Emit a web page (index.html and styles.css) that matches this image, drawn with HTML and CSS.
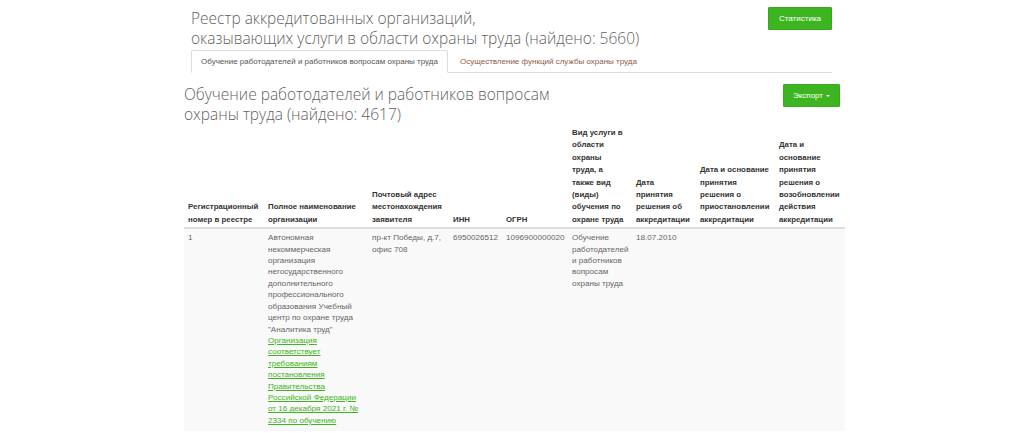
FILE: index.html
```html
<!DOCTYPE html>
<html lang="ru">
<head>
<meta charset="utf-8">
<title>Реестр аккредитованных организаций</title>
<link rel="stylesheet" href="styles.css">
</head>
<body>
<div class="top">
  <div class="top-head">
    <h1 class="page-title">Реестр аккредитованных организаций,<br>оказывающих услуги в области охраны труда (найдено: 5660)</h1>
    <a class="btn btn-stat" href="#">Статистика</a>
  </div>
  <ul class="tabs">
    <li class="tab active"><a href="#">Обучение работодателей и работников вопросам охраны труда</a></li>
    <li class="tab"><a href="#">Осуществление функций службы охраны труда</a></li>
  </ul>
</div>

<div class="section">
  <div class="section-head">
    <h2 class="section-title">Обучение работодателей и работников вопросам<br>охраны труда (найдено: 4617)</h2>
    <a class="btn btn-export" href="#">Экспорт <span class="caret"></span></a>
  </div>
  <table class="registry">
    <colgroup>
      <col class="c1"><col class="c2"><col class="c3"><col class="c4"><col class="c5"><col class="c6"><col class="c7"><col class="c8"><col class="c9">
    </colgroup>
    <thead>
      <tr>
        <th>Регистрационный номер в реестре</th>
        <th>Полное наименование организации</th>
        <th>Почтовый адрес местонахождения заявителя</th>
        <th>ИНН</th>
        <th>ОГРН</th>
        <th class="th-narrow">Вид услуги в области охраны труда, а также вид (виды) обучения по охране труда</th>
        <th>Дата принятия решения об аккредитации</th>
        <th>Дата и основание принятия решения о приостановлении аккредитации</th>
        <th>Дата и основание принятия решения о возобновлении действия аккредитации</th>
      </tr>
    </thead>
    <tbody>
      <tr>
        <td>1</td>
        <td>Автономная некоммерческая организация негосударственного дополнительного профессионального образования Учебный центр по охране труда "Аналитика труд"<br><a class="doc-link" href="#">Организация соответствует требованиям постановления Правительства Российской Федерации от 16 декабря 2021 г. № 2334 по обучению</a></td>
        <td>пр-кт Победы, д.7, офис 708</td>
        <td>6950026512</td>
        <td>1096900000020</td>
        <td>Обучение работодателей и работников вопросам охраны труда</td>
        <td>18.07.2010</td>
        <td></td>
        <td></td>
      </tr>
    </tbody>
  </table>
</div>
</body>
</html>
```

FILE: styles.css
```css
html, body {
  margin: 0;
  padding: 0;
  background: #fff;
}
body {
  font-family: "Liberation Sans", Arial, sans-serif;
  font-size: 8px;
  line-height: 11px;
  color: #666;
}
a { text-decoration: none; }

.top {
  width: 641px;
  margin-left: 191px;
}
.top-head {
  display: flex;
  justify-content: space-between;
  align-items: flex-start;
  margin-bottom: 2px;
}
.page-title {
  margin: 0;
  padding-top: 8px;
  font-family: "Open Sans", sans-serif;
  font-weight: 300;
  font-size: 15.5px;
  line-height: 20px;
  color: #5f5f5f;
}
.btn {
  display: inline-flex;
  align-items: center;
  justify-content: center;
  background: #3cb521;
  border: 1px solid #3aa91f;
  color: #fff;
  font-size: 8px;
  height: 23px;
  box-sizing: border-box;
  border-radius: 1px;
}
.btn-stat {
  width: 64px;
  margin-top: 7px;
}
.tabs {
  display: flex;
  list-style: none;
  margin: 0;
  padding: 0;
  border-bottom: 1px solid #ddd;
}
.tab {
  margin-bottom: -1px;
  margin-right: 2px;
}
.tab a {
  display: block;
  padding: 5px 9px;
  line-height: 11px;
  border: 1px solid transparent;
  border-radius: 2px 2px 0 0;
  color: #8f5b48;
}
.tab.active a {
  color: #555;
  background: #fff;
  border-color: #ddd #ddd transparent;
}

.section {
  width: 661px;
  margin-left: 184px;
}
.section-head {
  display: flex;
  justify-content: space-between;
  align-items: flex-start;
  margin-top: 11px;
}
.section-title {
  margin: 0;
  font-family: "Open Sans", sans-serif;
  font-weight: 300;
  font-size: 15.5px;
  line-height: 20px;
  color: #5f5f5f;
}
.btn-export {
  width: 57px;
  margin-right: 5px;
  gap: 3px;
}
.caret {
  display: inline-block;
  width: 0;
  height: 0;
  border-left: 2.5px solid transparent;
  border-right: 2.5px solid transparent;
  border-top: 2.5px solid #fff;
}

.registry {
  width: 661px;
  table-layout: fixed;
  border-collapse: collapse;
}
.c1 { width: 80px; }
.c2 { width: 104px; }
.c3 { width: 81px; }
.c4 { width: 53px; }
.c5 { width: 66px; }
.c6 { width: 64px; }
.c7 { width: 64px; }
.c8 { width: 79px; }
.c9 { width: 70px; }
.registry th {
  text-align: left;
  vertical-align: bottom;
  font-weight: bold;
  font-size: 7.85px;
  color: #333;
  padding: 3px 4px 1px;
  line-height: 12.4px;
  border-bottom: 2px solid #ddd;
}
.registry th.th-narrow {
  padding-right: 5.5px;
}
.registry td {
  vertical-align: top;
  padding: 3px 4px 5px;
  font-size: 8.1px;
  line-height: 11.4px;
  background: #f9f9f9;
  color: #666;
}
.doc-link {
  color: #3cb521;
  text-decoration: underline;
}
```
